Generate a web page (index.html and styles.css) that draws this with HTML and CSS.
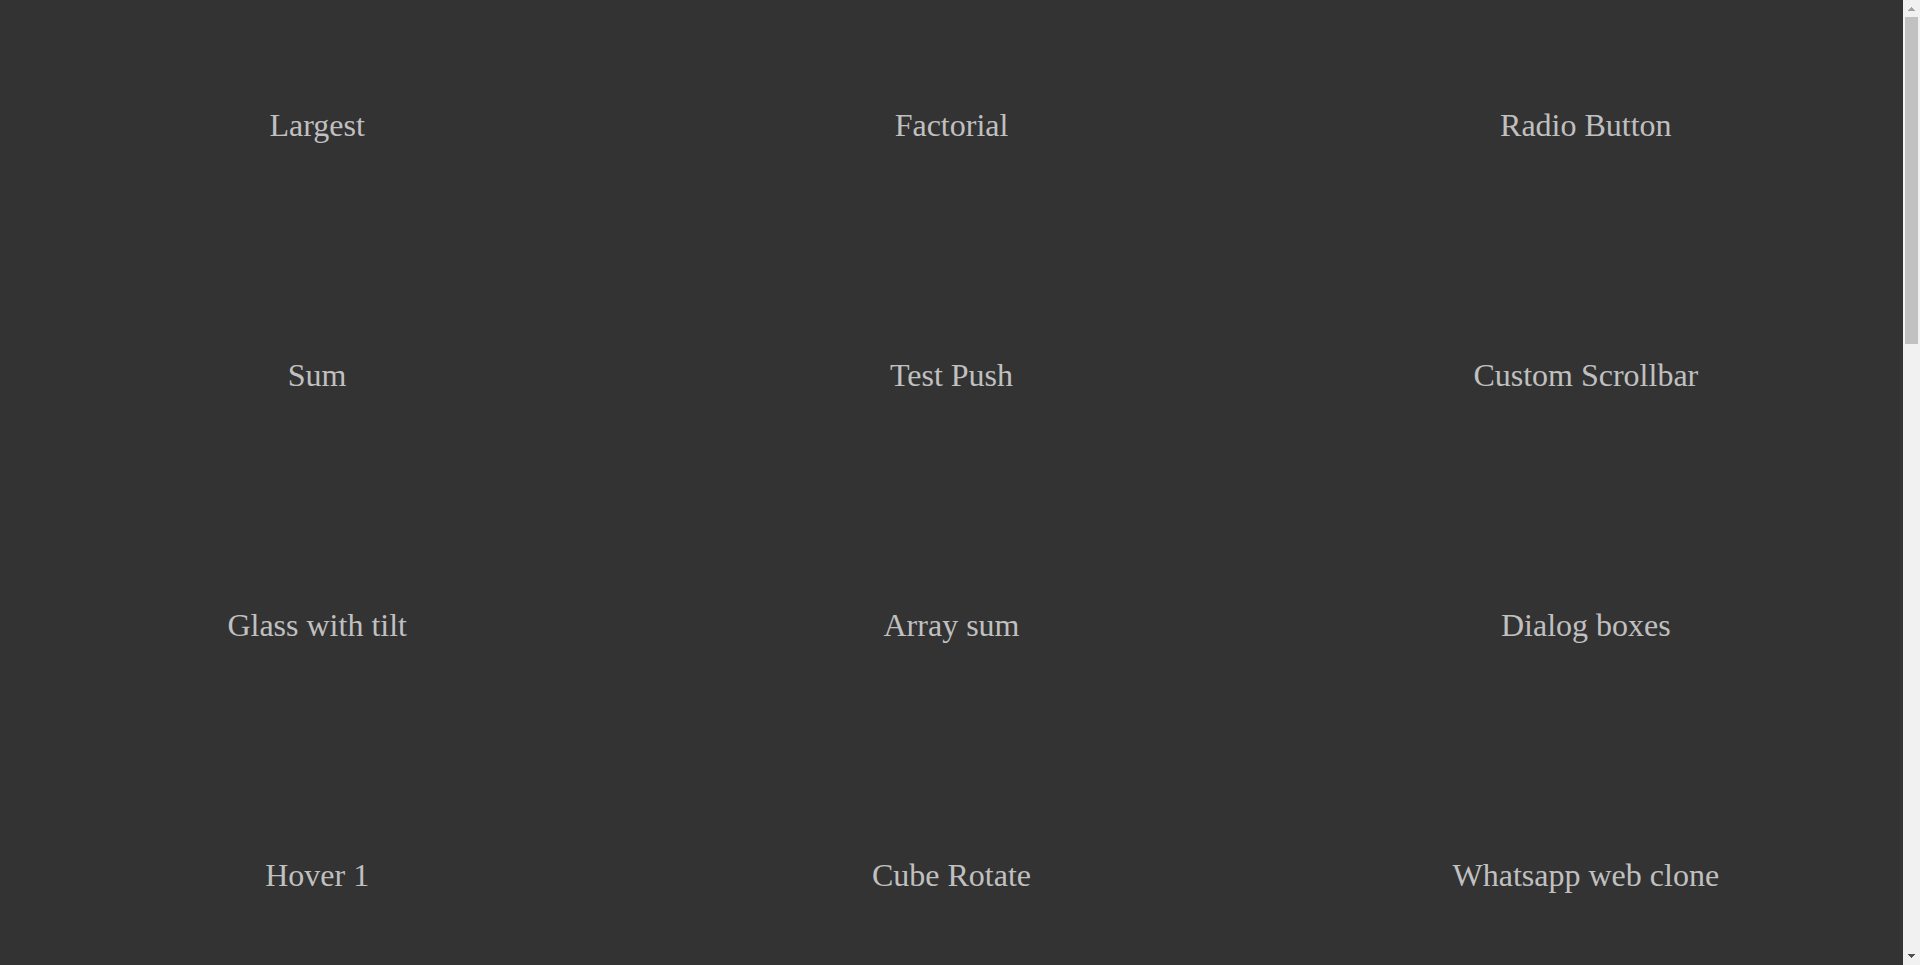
FILE: index.html
```html
<!DOCTYPE html>
<html lang="en">
<head>
<meta charset="utf-8">
<title>Projects</title>
<link rel="stylesheet" href="styles.css">
</head>
<body>
<div class="page">
  <main class="grid">
    <a class="tile" href="#largest">Largest</a>
    <a class="tile" href="#factorial">Factorial</a>
    <a class="tile" href="#radio">Radio Button</a>
    <a class="tile" href="#sum">Sum</a>
    <a class="tile" href="#push">Test Push</a>
    <a class="tile" href="#scrollbar">Custom Scrollbar</a>
    <a class="tile" href="#glass">Glass with tilt</a>
    <a class="tile" href="#array">Array sum</a>
    <a class="tile" href="#dialog">Dialog boxes</a>
    <a class="tile" href="#hover">Hover 1</a>
    <a class="tile" href="#cube">Cube Rotate</a>
    <a class="tile" href="#whatsapp">Whatsapp web clone</a>
  </main>
  <div class="scrollbar">
    <button class="arrow arrow-up" type="button" aria-label="Scroll up">
      <svg width="17" height="17" shape-rendering="crispEdges" fill="currentColor"><path d="M8 7h1v1h1v1h1v1h1v1H5v-1h1V9h1V8h1z"/></svg>
    </button>
    <div class="track"><div class="thumb"></div></div>
    <button class="arrow" type="button" aria-label="Scroll down">
      <svg width="17" height="17" shape-rendering="crispEdges" fill="currentColor"><path d="M5 6h7v1h-1v1h-1v1H9v1H8V9H7V8H6V7H5z"/></svg>
    </button>
  </div>
</div>
</body>
</html>
```
FILE: styles.css
```css
body {
  margin: 0;
  background: #333;
  font-family: "Liberation Serif", "Times New Roman", serif;
}

.page {
  display: flex;
  height: 100vh;
  overflow: hidden;
}

.grid {
  flex: 1;
  display: grid;
  grid-template-columns: repeat(3, 1fr);
  grid-auto-rows: 250px;
}

.tile {
  display: flex;
  align-items: center;
  justify-content: center;
  background: #333;
  color: #c0c0c0;
  font-size: 32px;
  text-decoration: none;
}

.scrollbar {
  display: flex;
  flex-direction: column;
  width: 17px;
  background: #f1f1f1;
}

.arrow {
  height: 17px;
  padding: 0;
  border: 0;
  background: none;
  color: #505050;
}

.arrow svg {
  display: block;
}

.arrow-up {
  color: #a3a3a3;
}

.track {
  flex: 1;
  padding: 0 2px;
}

.thumb {
  height: 35.1%;
  background: #c1c1c1;
}
```
